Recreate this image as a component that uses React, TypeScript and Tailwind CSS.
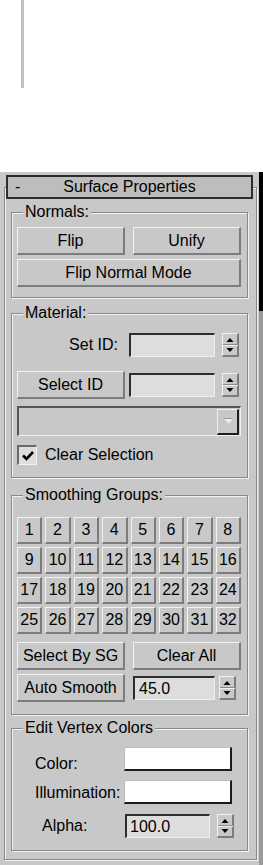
import React from "react";

const raised =
  "border-t border-l border-t-[#f2f2f2] border-l-[#f2f2f2] border-b-2 border-r-2 border-b-[#7c7c7c] border-r-[#7c7c7c]";
const sunken =
  "border-t-2 border-l-2 border-t-[#2e2e2e] border-l-[#2e2e2e] border-b border-r border-b-[#efefef] border-r-[#efefef] bg-[#dddddd]";

function Btn({ children, className }: { children: React.ReactNode; className: string }) {
  return (
    <div className={`flex items-center justify-center bg-[#c8c8c8] ${raised} ${className}`}>
      {children}
    </div>
  );
}

function Spinner({ className }: { className: string }) {
  return (
    <div className={`w-[17px] h-[24px] bg-[#c8c8c8] ${raised} ${className}`}>
      <svg width="15" height="22" viewBox="0 0 15 22" className="block">
        <polygon points="3.5,8 10.5,8 7,4" fill="#000" />
        <line x1="0" y1="10.5" x2="15" y2="10.5" stroke="#8a8a8a" strokeWidth="1" />
        <line x1="0" y1="11.5" x2="15" y2="11.5" stroke="#efefef" strokeWidth="1" />
        <polygon points="3.5,14 10.5,14 7,18" fill="#000" />
      </svg>
    </div>
  );
}

function Group({
  label,
  className,
  children,
}: {
  label: string;
  className: string;
  children: React.ReactNode;
}) {
  return (
    <div
      className={`relative ml-[6px] w-[237px] border border-[#888888] shadow-[inset_1px_1px_0_#f2f2f2,1px_1px_0_#f2f2f2] ${className}`}
    >
      <span className="absolute left-[11px] top-[-10px] px-[2px] bg-[#c8c8c8] leading-[18px] whitespace-nowrap">
        {label}
      </span>
      {children}
    </div>
  );
}

export default function App() {
  const nums = Array.from({ length: 32 }, (_, i) => i + 1);
  return (
    <div className="w-[263px] h-[865px] bg-white flex flex-col overflow-hidden text-[16px] leading-[18px] text-black font-['Liberation_Sans',Arial,sans-serif]">
      <div className="h-[172px] shrink-0">
        <div className="ml-[21px] w-[3px] h-[88px] bg-[#c2c2c2]" />
      </div>
      <div className="flex flex-1">
        <div className="w-[259px] bg-[#c8c8c8] pt-[15px]">
          <div className="ml-[4px] w-[253px] h-[673px] border border-[#888888] shadow-[inset_1px_1px_0_#f2f2f2,1px_1px_0_#f2f2f2] flex flex-col">
            {/* Rollout header */}
            <div className="-mt-[13px] ml-[1px] w-[247px] h-[24px] shrink-0 border-2 border-[#2c2c2c] bg-[#bdbdbd] grid grid-cols-[1fr_auto_1fr] items-center">
              <span className="pl-[7px]">-</span>
              <span>Surface Properties</span>
              <span />
            </div>

            {/* Normals */}
            <Group label="Normals:" className="mt-[13px] pt-[14px] pb-[10px] pl-[5px] pr-[6px]">
              <div className="grid grid-cols-2 gap-x-[8px]">
                <Btn className="h-[28px]">Flip</Btn>
                <Btn className="h-[28px]">Unify</Btn>
              </div>
              <Btn className="h-[28px] mt-[4px]">Flip Normal Mode</Btn>
            </Group>

            {/* Material */}
            <Group label="Material:" className="mt-[15px] pt-[19px] pb-[12px] pl-[5px] pr-[6px]">
              <div className="flex items-center h-[24px]">
                <span className="w-[108px] text-right pr-[7px]">Set ID:</span>
                <div className={`ml-[4px] w-[86px] h-[24px] ${sunken}`} />
                <Spinner className="ml-[7px]" />
              </div>
              <div className="flex items-center h-[28px] mt-[14px]">
                <Btn className="w-[108px] h-[28px]">Select ID</Btn>
                <div className={`ml-[4px] w-[86px] h-[24px] ${sunken}`} />
                <Spinner className="ml-[7px]" />
              </div>
              <div className="mt-[7px] h-[30px] flex justify-end items-center border-t-2 border-l-2 border-t-[#555555] border-l-[#555555] border-b border-r border-b-[#efefef] border-r-[#efefef] pr-[1px]">
                <div className="w-[22px] h-[26px] bg-[#c8c8c8] border-t border-l border-t-[#efefef] border-l-[#efefef] border-b-2 border-r-2 border-b-[#1e1e1e] border-r-[#1e1e1e] flex items-center justify-center">
                  <svg width="14" height="10" viewBox="0 0 14 10">
                    <polygon points="2,2 12,2 7,7" fill="#9a9a9a" />
                    <polygon points="3,3 12,3 7.5,7.5" fill="#eeeeee" />
                  </svg>
                </div>
              </div>
              <div className="mt-[9px] h-[20px] flex items-center">
                <div className="w-[20px] h-[20px] border-t-2 border-l-2 border-t-[#6a6a6a] border-l-[#6a6a6a] border-b border-r border-b-[#f2f2f2] border-r-[#f2f2f2] bg-[#dedede] flex items-center justify-center">
                  <svg width="14" height="14" viewBox="0 0 14 14">
                    <polyline points="2,6.5 5.5,10 12,3" fill="none" stroke="#000" strokeWidth="2.6" />
                  </svg>
                </div>
                <span className="ml-[8px]">Clear Selection</span>
              </div>
            </Group>

            {/* Smoothing Groups */}
            <Group label="Smoothing Groups:" className="mt-[17px] pt-[21px] pb-[12px] pl-[5px] pr-[6px]">
              <div className="grid grid-cols-8 gap-[3px]">
                {nums.map((n) => (
                  <Btn key={n} className="h-[27px]">
                    {n}
                  </Btn>
                ))}
              </div>
              <div className="grid grid-cols-2 gap-x-[8px] mt-[8px]">
                <Btn className="h-[28px]">Select By SG</Btn>
                <Btn className="h-[28px]">Clear All</Btn>
              </div>
              <div className="flex items-center h-[28px] mt-[4px]">
                <Btn className="w-[108px] h-[28px]">Auto Smooth</Btn>
                <div className={`ml-[8px] w-[82px] h-[24px] pl-[4px] flex items-center ${sunken}`}>45.0</div>
                <Spinner className="ml-[4px]" />
              </div>
            </Group>

            {/* Edit Vertex Colors */}
            <Group label="Edit Vertex Colors" className="mt-[13px] pt-[18px] pb-[12px]">
              <div className="flex items-center h-[24px] pl-[23px]">
                <span className="w-[89px] pt-[10px]">Color:</span>
                <div className="w-[108px] h-[24px] bg-white border-t border-l border-t-[#bdbdbd] border-l-[#bdbdbd] border-b-2 border-r-2 border-b-[#1c1c1c] border-r-[#1c1c1c]" />
              </div>
              <div className="flex items-center h-[24px] mt-[9px] pl-[23px]">
                <span className="w-[89px] pt-[2px] whitespace-nowrap">Illumination:</span>
                <div className="w-[108px] h-[24px] bg-white border-t border-l border-t-[#bdbdbd] border-l-[#bdbdbd] border-b-2 border-r-2 border-b-[#1c1c1c] border-r-[#1c1c1c]" />
              </div>
              <div className="flex items-center h-[24px] mt-[10px] pl-[30px]">
                <span className="w-[83px]">Alpha:</span>
                <div className={`w-[85px] h-[24px] pl-[3px] flex items-center ${sunken}`}>100.0</div>
                <Spinner className="ml-[7px]" />
              </div>
            </Group>
          </div>
        </div>
        <div className="w-[4px] flex flex-col">
          <div className="h-[139px] bg-black" />
          <div className="flex-1 bg-[#9a9a9a]" />
        </div>
      </div>
    </div>
  );
}
